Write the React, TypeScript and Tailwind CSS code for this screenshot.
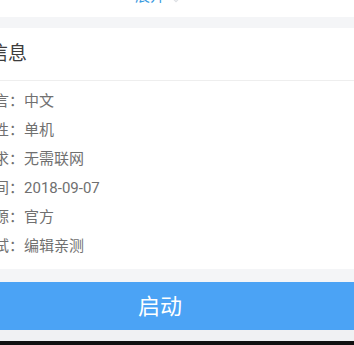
const rows = [
  ['游戏语言', '中文'],
  ['游戏属性', '单机'],
  ['网络要求', '无需联网'],
  ['更新时间', '2018-09-07'],
  ['游戏来源', '官方'],
  ['游戏测试', '编辑亲测'],
]

export default function App() {
  return (
    <div
      className="w-[354px] h-[345px] overflow-hidden bg-[#f4f5f7]"
      style={{ fontFamily: 'Roboto, "Noto Sans CJK SC", sans-serif' }}
    >
      <div className="ml-[-66px] w-[452px]">
        {/* 展开 */}
        <div className="h-[17px] overflow-hidden bg-white">
          <div className="mt-[-14px] flex h-[20px] items-center justify-center gap-[6px] pr-[4px] text-[15px] leading-[20px] text-[#3a9ae0]">
            <span>展开</span>
            <svg viewBox="0 0 12 12" className="mt-[8px] h-[10px] w-[10px]" fill="none">
              <path d="M2 4l4 4 4-4" stroke="#dde0e4" strokeWidth="1.5" />
            </svg>
          </div>
        </div>

        <div className="h-[11px]" />

        {/* 信息 card */}
        <div className="bg-white pb-[8px]">
          <div className="flex h-[53px] items-center border-b border-[#eeeeee] pl-[17px] text-[19px] text-[#3c3c3c]">
            游戏信息
          </div>
          <div className="pt-[6px]">
            {rows.map(([k, v]) => (
              <div key={k} className="flex h-[29px] items-center pl-[15px] text-[15px] text-[#707070]">
                <span>{k}：</span>
                <span>{v}</span>
              </div>
            ))}
          </div>
        </div>

        <div className="h-[13px]" />

        <button
          type="button"
          className="flex h-[48px] w-full items-center justify-center bg-[#4ba3f5] text-[22px] text-white"
        >
          启动
        </button>

        <div className="h-[11px] bg-[#f0f1f3]" />
        <div className="h-[8px] bg-[#111111]" />
      </div>
    </div>
  )
}
